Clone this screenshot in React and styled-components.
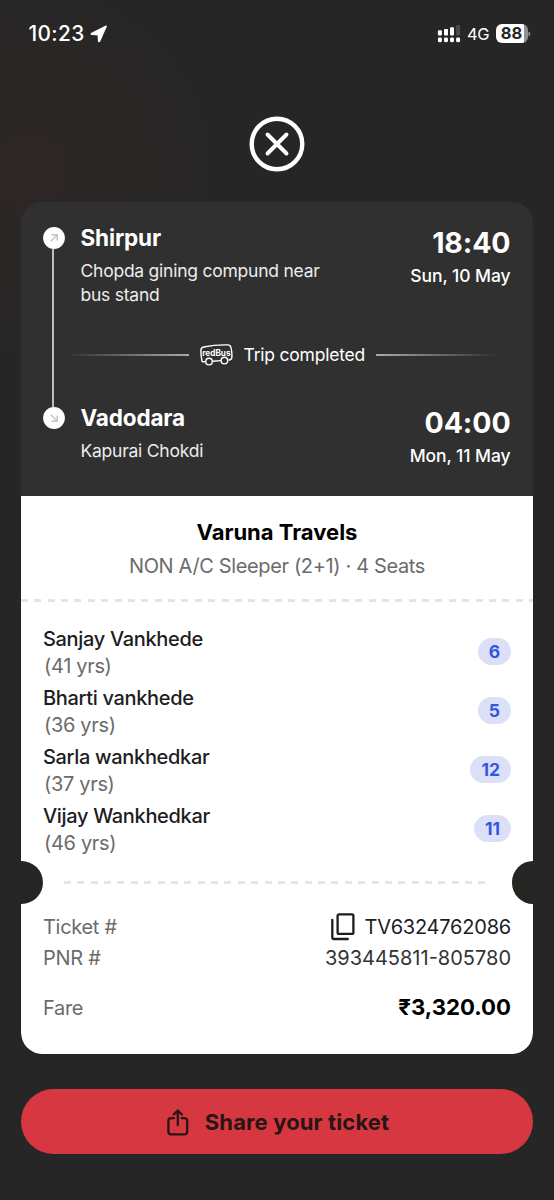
import React from 'react'
import styled, { createGlobalStyle } from 'styled-components'

const passengers = [
    { name: 'Sanjay Vankhede', age: 41, seat: 6 },
    { name: 'Bharti vankhede', age: 36, seat: 5 },
    { name: 'Sarla wankhedkar', age: 37, seat: 12 },
    { name: 'Vijay Wankhedkar', age: 46, seat: 11 },
]

function StatusBar() {
    return (
        <Status_bar>
            <div className="status_left">
                <span className="status_time">10:23</span>
                <svg width="18" height="18" viewBox="0 0 18 18">
                    <path d="M16.2 1.2 L9.6 16.2 Q9 17.2 8.6 16 L8.3 9.7 L1.8 9.4 Q0.7 9 1.8 8.3 Z" fill="#fff" stroke="#fff" strokeWidth="1.4" strokeLinejoin="round" />
                </svg>
            </div>
            <div className="status_right">
                <svg width="24" height="18" viewBox="0 0 24 18">
                    <g fill="#fff">
                        <rect x="0.9" y="5.2" width="4" height="5.4" rx="1" />
                        <rect x="7" y="4" width="4" height="6.6" rx="1" />
                        <rect x="13" y="2.2" width="4" height="8.4" rx="1" />
                        <rect x="19.1" y="0" width="4" height="10.6" rx="1" fill="#4b4b4b" />
                        <rect x="0.9" y="12.6" width="4" height="4.6" rx="1.4" />
                        <rect x="7" y="12.6" width="4" height="4.6" rx="1.4" />
                        <rect x="13" y="12.6" width="4" height="4.6" rx="1.4" />
                        <rect x="19.1" y="12.6" width="4" height="4.6" rx="1.4" />
                    </g>
                </svg>
                <span className="status_network">4G</span>
                <Battery><span>88</span></Battery>
                <svg width="3" height="6" viewBox="0 0 3 6">
                    <path d="M0.4 0.6 Q2.4 1.4 2.4 3 Q2.4 4.6 0.4 5.4 Z" fill="#8f8f8f" />
                </svg>
            </div>
        </Status_bar>
    )
}

function BusIcon() {
    return (
        <svg width="33" height="22" viewBox="0 0 33 22" fill="none" stroke="#fff" strokeWidth="1.4" strokeLinecap="round" strokeLinejoin="round">
            <path d="M5.4 17.6 L2.8 17.8 Q2.2 17.8 2 17 Q0.8 12 0.9 6.2 Q1 3.6 3.6 3 Q15 0.6 27.6 0.9 Q30.4 1 31 3.6 Q32.3 9 31.8 13.6 Q31.6 15.6 29 16" />
            <path d="M12.8 17.2 L20.6 16.6" />
            <circle cx="9" cy="17.6" r="3.3" />
            <circle cx="24.4" cy="16.6" r="3.3" />
            <text x="2.2" y="11.8" fill="#fff" stroke="none" fontFamily="Inter, sans-serif" fontSize="8.6" fontWeight="700" textLength="28.4" lengthAdjust="spacingAndGlyphs">redBus</text>
        </svg>
    )
}

function Stop({ city, address, time, date }) {
    return (
        <Stop_row>
            <div className="stop_place">
                <h2>{city}</h2>
                <p>{address}</p>
            </div>
            <div className="stop_when">
                <h3>{time}</h3>
                <p>{date}</p>
            </div>
        </Stop_row>
    )
}

function Route() {
    return (
        <Route_sec>
            <Rail>
                <svg width="22" height="22" viewBox="0 0 22 22">
                    <circle cx="11" cy="11" r="10.9" fill="#fff" />
                    <path d="M7.8 14.2 L14 8 M8.4 7.8 H14.2 V13.6" fill="none" stroke="#c4c4c4" strokeWidth="1.5" />
                </svg>
                <span className="rail_line" />
                <svg width="22" height="22" viewBox="0 0 22 22">
                    <circle cx="11" cy="11" r="10.9" fill="#fff" />
                    <path d="M7.8 7.8 L14 14 M14.2 8.4 V14.2 H8.4" fill="none" stroke="#c4c4c4" strokeWidth="1.5" />
                </svg>
            </Rail>
            <div className="route_content">
                <Stop city="Shirpur" address={<>Chopda gining compund near<br />bus stand</>} time="18:40" date="Sun, 10 May" />
                <Trip_status>
                    <Fade_line $to="left" />
                    <BusIcon />
                    <p>Trip completed</p>
                    <Fade_line $to="right" />
                </Trip_status>
                <Stop city="Vadodara" address="Kapurai Chokdi" time="04:00" date="Mon, 11 May" />
            </div>
        </Route_sec>
    )
}

export default function App() {
    return (
        <Screen>
            <GlobalStyle />
            <StatusBar />
            <Close_button aria-label="Close">
                <svg width="56" height="56" viewBox="0 0 56 56" fill="none" stroke="#fff" strokeLinecap="round">
                    <circle cx="28" cy="28" r="25.3" strokeWidth="4.4" />
                    <path d="M18.5 18.5 L37.5 37.5 M37.5 18.5 L18.5 37.5" strokeWidth="3.9" />
                </svg>
            </Close_button>

            <Ticket>
                <Route />
                <Operator>
                    <h2>Varuna Travels</h2>
                    <p>NON A/C Sleeper (2+1) · 4 Seats</p>
                </Operator>
                <Dashes />
                <Passengers>
                    {passengers.map((p) => (
                        <Passenger key={p.seat}>
                            <div>
                                <h4>{p.name}</h4>
                                <p>({p.age} yrs)</p>
                            </div>
                            <Seat>{p.seat}</Seat>
                        </Passenger>
                    ))}
                </Passengers>
                <Tear>
                    <Notch $side="left" />
                    <Dashes />
                    <Notch $side="right" />
                </Tear>
                <Details>
                    <Detail_row>
                        <label>Ticket #</label>
                        <Ticket_no>
                            <svg width="24" height="28" viewBox="0 0 24 28" fill="none" stroke="#1d1d1f" strokeWidth="2.3" strokeLinecap="round" strokeLinejoin="round">
                                <rect x="6.6" y="1.4" width="15.8" height="19.4" rx="1.4" />
                                <path d="M1.3 7 V24.8 Q1.3 26 2.5 26 H16.8" />
                            </svg>
                            TV6324762086
                        </Ticket_no>
                    </Detail_row>
                    <Detail_row>
                        <label>PNR #</label>
                        <Pnr>393445811-805780</Pnr>
                    </Detail_row>
                    <Detail_row $gap>
                        <label>Fare</label>
                        <Fare>₹3,320.00</Fare>
                    </Detail_row>
                </Details>
            </Ticket>

            <Share_button>
                <svg width="22" height="27" viewBox="0 0 22 27" fill="none" stroke="#2a1516" strokeWidth="2.3" strokeLinecap="round" strokeLinejoin="round">
                    <path d="M7 9.2 H4.2 Q1.4 9.2 1.4 12 V22.6 Q1.4 25.4 4.2 25.4 H17.4 Q20.2 25.4 20.2 22.6 V12 Q20.2 9.2 17.4 9.2 H14.6" />
                    <path d="M10.8 16.2 V1.6 M6.8 5.4 L10.8 1.5 L14.8 5.4" />
                </svg>
                <span>Share your ticket</span>
            </Share_button>
        </Screen>
    )
}

const GlobalStyle = createGlobalStyle`
    *{
        box-sizing: border-box;
        margin:0;
        padding:0;
    }
    body{
        background: #262626;
        font-family: Inter, "Liberation Sans", sans-serif;
    }
    svg{
        display:block;
        flex:none;
    }
`

const Screen = styled.div`
    display:flex;
    flex-direction:column;
    height:1200px;
    padding:0 21px;
    background:
        radial-gradient(circle at 30px 170px, #2d2626 0, rgba(45,38,38,0) 210px),
        #262626;
`

const Status_bar = styled.header`
    display:flex;
    justify-content:space-between;
    height:67px;
    padding:0 2px 0 7.5px;
    color:#fff;

    .status_left, .status_right{
        display:flex;
        align-items:center;
    }
    .status_left{
        gap:5px;
    }
    .status_time{
        font-size:20.8px;
        font-weight:500;
        letter-spacing:0.4px;
    }
    .status_network{
        margin:1px 7px 0 6px;
        font-size:16.5px;
        font-weight:400;
        letter-spacing:-0.5px;
    }
`

const Battery = styled.div`
    display:flex;
    align-items:center;
    justify-content:center;
    width:32px;
    height:19px;
    padding-right:1px;
    border-radius:6px;
    background:linear-gradient(90deg, #fff 28px, #919191 28px);
    color:#262626;
    font-size:16.5px;
    font-weight:700;
    line-height:19px;
`

const Close_button = styled.button`
    align-self:center;
    margin-top:49px;
    border:none;
    background:none;
`

const Ticket = styled.main`
    height:852px;
    margin-top:30px;
    border-radius:21px;
    background:linear-gradient(#303030 50%, #fff 50%) 0 0 / 100% 100px no-repeat, #fff;
    clip-path:inset(0 round 21px);
`

const Route_sec = styled.section`
    display:flex;
    height:293.5px;
    padding:22px 22px 0 21.5px;
    background:#303030;
    color:#fff;

    .route_content{
        flex:1;
        margin-left:2px;
    }
`

const Rail = styled.div`
    display:flex;
    flex-direction:column;
    align-items:center;
    height:202px;
    margin-top:3px;

    .rail_line{
        flex:1;
        width:2px;
        margin-right:1px;
        background:#bdbdbd;
    }
`

const Stop_row = styled.div`
    display:flex;
    justify-content:space-between;
    padding-left:14px;

    h2{
        font-size:22.5px;
        font-weight:700;
        line-height:28px;
        letter-spacing:-0.15px;
    }
    h3{
        margin-top:2px;
        font-size:28.5px;
        font-weight:700;
        line-height:34px;
        letter-spacing:-0.1px;
    }
    p{
        font-size:17.5px;
        line-height:24px;
        white-space:nowrap;
    }
    .stop_place p{
        margin-top:7px;
        color:#ececec;
        letter-spacing:-0.24px;
    }
    .stop_when{
        padding-right:0.5px;
        text-align:right;
    }
    .stop_when p{
        margin-top:4px;
        font-weight:500;
        letter-spacing:-0.08px;
    }
`

const Trip_status = styled.div`
    display:flex;
    align-items:center;
    gap:11px;
    height:97px;
    padding:0 13px 2px 0;

    p{
        font-size:17.5px;
        line-height:24px;
        letter-spacing:-0.22px;
        white-space:nowrap;
    }
`

const Fade_line = styled.span`
    flex:1;
    height:2px;
    background:linear-gradient(to ${(props) => props.$to}, #aaa, #303030);
`

const Operator = styled.section`
    padding-top:22.5px;
    text-align:center;

    h2{
        color:#000;
        font-size:22px;
        font-weight:700;
        line-height:28px;
    }
    p{
        margin-top:6.5px;
        margin-bottom:20.5px;
        color:#6b6b6b;
        font-size:20px;
        line-height:26px;
        letter-spacing:-0.36px;
    }
`

const Dashes = styled.div`
    flex:1;
    height:3px;
    background:repeating-linear-gradient(90deg, #e4e4e4 0, #e4e4e4 7px, transparent 7px, transparent 13.37px);
`

const Passengers = styled.section`
    display:flex;
    flex-direction:column;
    gap:5.2px;
    padding:23.8px 22px 3.2px 22px;
`

const Passenger = styled.div`
    display:flex;
    align-items:center;
    justify-content:space-between;

    h4, p{
        font-size:20px;
        line-height:27px;
        letter-spacing:-0.33px;
    }
    h4{
        color:#1d1d1f;
        font-weight:500;
    }
    p{
        padding-left:1px;
        color:#6b6b6b;
    }
`

const Seat = styled.span`
    min-width:33px;
    margin-bottom:3.4px;
    padding:0 11px;
    border-radius:14px;
    background:#dbe0f8;
    color:#3357de;
    font-size:17.5px;
    font-weight:700;
    line-height:27px;
    text-align:center;
`

const Tear = styled.div`
    display:flex;
    align-items:center;
    gap:21.5px;
`

const Notch = styled.span`
    width:21.5px;
    height:43px;
    border-radius:${(props) => (props.$side === 'left' ? '0 22px 22px 0' : '22px 0 0 22px')};
    background:#262524;
`

const Details = styled.section`
    padding:8.2px 22px 0 22px;
`

const Detail_row = styled.div`
    display:flex;
    align-items:center;
    justify-content:space-between;
    height:30.7px;
    margin-top:${(props) => (props.$gap ? '19.4px' : '0')};
    font-size:20px;

    label{
        color:#6b6b6b;
        letter-spacing:-0.3px;
    }
`

const Ticket_no = styled.span`
    display:flex;
    align-items:center;
    gap:10px;
    color:#1d1d1f;
    letter-spacing:-0.22px;
`

const Pnr = styled.span`
    color:#333;
`

const Fare = styled.strong`
    margin-bottom:2px;
    color:#000;
    font-size:22.2px;
    font-weight:700;
`

const Share_button = styled.button`
    display:flex;
    align-items:center;
    justify-content:center;
    gap:16px;
    height:65px;
    margin-top:35px;
    padding-left:2px;
    border:none;
    border-radius:33px;
    background:#d63740;
    color:#2a1516;
    font-family:inherit;
    font-size:22px;
    font-weight:700;
    letter-spacing:0.13px;

    svg{
        margin-top:2px;
    }
`
